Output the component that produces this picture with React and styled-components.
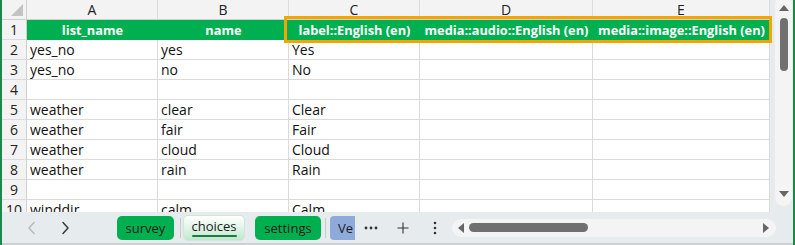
import React from "react";
import styled, { createGlobalStyle } from "styled-components";

const Global = createGlobalStyle`
  html, body { margin: 0; padding: 0; background: #fff; }
  body { font-family: "Open Sans", "Noto Sans", sans-serif; }
  * { box-sizing: border-box; }
`;

const GREEN = "#00b050";
const GRID = "#dadada";

const Window = styled.div`
  position: relative;
  width: 795px;
  height: 245px;
  border-left: 2px solid #1a8a4a;
  border-right: 2px solid #1a8a4a;
  background: #e6ebee;
  display: flex;
  flex-direction: column;
  overflow: hidden;
`;

const TopArea = styled.div`
  display: flex;
  height: 212px;
  overflow: hidden;
`;

const Sheet = styled.div`
  display: grid;
  grid-template-columns: 25px 131px 131px 131px 173px 177px;
  grid-auto-rows: 20px;
  width: 768px;
  background: #fff;
  align-content: start;
`;

const Cell = styled.div`
  border-right: 1px solid ${GRID};
  border-bottom: 1px solid ${GRID};
  font-size: 14px;
  color: #111;
  line-height: 20px;
  padding-left: 3px;
  white-space: nowrap;
  overflow: hidden;
`;

const HeadCell = styled.div`
  background: ${GREEN};
  color: #fff;
  font-weight: 700;
  font-size: 12.8px;
  line-height: 20px;
  text-align: center;
  white-space: nowrap;
  overflow: hidden;
`;

const ColLetter = styled.div`
  background: #f3f3f3;
  border-right: 1px solid #dcdcdc;
  border-bottom: 1px solid #cfcfcf;
  text-align: center;
  font-size: 14px;
  line-height: 19px;
  color: #222;
`;

const RowNum = styled.div`
  background: #f3f3f3;
  border-right: 1px solid #cfcfcf;
  border-bottom: 1px solid #dcdcdc;
  text-align: center;
  font-size: 14px;
  line-height: 20px;
  color: #222;
`;

const Corner = styled.div`
  position: relative;
  background: #f3f3f3;
  border-right: 1px solid #cfcfcf;
  border-bottom: 1px solid #cfcfcf;
  &::after {
    content: "";
    position: absolute;
    right: 3px;
    bottom: 3px;
    width: 0;
    height: 0;
    border-left: 12px solid transparent;
    border-bottom: 12px solid #c3c3c3;
  }
`;

const Highlight = styled.div`
  position: absolute;
  left: 282px;
  top: 16px;
  width: 488px;
  height: 27px;
  border: 3px solid #f5a500;
  pointer-events: none;
`;

const VScrollCol = styled.div`
  width: 23px;
  padding: 0 1px 0 5px;
  background: #e6ebee;
`;

const VTrack = styled.div`
  position: relative;
  height: 210px;
  margin-top: -4px;
  background: #f4f4f4;
  border-radius: 9px;
  display: flex;
  flex-direction: column;
  align-items: center;
`;

const TriUp = styled.div`
  margin-top: 9px;
  width: 0;
  height: 0;
  border-left: 5px solid transparent;
  border-right: 5px solid transparent;
  border-bottom: 6px solid #666;
`;

const VThumb = styled.div`
  margin-top: 7px;
  width: 8px;
  height: 53px;
  border-radius: 4px;
  background: #707070;
`;

const TriDown = styled.div`
  margin-top: auto;
  margin-bottom: 9px;
  width: 0;
  height: 0;
  border-left: 5px solid transparent;
  border-right: 5px solid transparent;
  border-top: 6px solid #666;
`;

const TabBar = styled.div`
  height: 33px;
  border-bottom: 2px solid #cdd0d2;
  display: flex;
  align-items: center;
  padding-left: 14px;
`;

const Nav = styled.div`
  width: 32px;
  height: 24px;
  display: flex;
  align-items: center;
  justify-content: center;
  margin-right: ${(p) => p.$mr || 0}px;
`;

const Tab = styled.div`
  height: 24px;
  width: ${(p) => p.$w}px;
  margin-left: ${(p) => p.$ml || 0}px;
  border-radius: 5px;
  background: ${GREEN};
  color: #1b1b1b;
  font-size: 13px;
  line-height: 24px;
  text-align: center;
  white-space: nowrap;
  overflow: hidden;
`;

const ActiveTab = styled.div`
  position: relative;
  height: 26px;
  width: ${(p) => p.$w}px;
  margin-left: ${(p) => p.$ml || 0}px;
  border-radius: 5px;
  border: 1px solid #cfe5d6;
  background: linear-gradient(180deg, #ffffff 0%, #e6f6eb 40%, #bfe8cd 100%);
  color: #1b1b1b;
  font-size: 13px;
  font-weight: 500;
  line-height: 20px;
  text-align: center;
  &::after {
    content: "";
    position: absolute;
    left: 8px;
    right: 7px;
    bottom: 3px;
    height: 2px;
    background: #1d7a45;
    border-radius: 1px;
  }
`;

const PeekTab = styled.div`
  height: 24px;
  width: 25px;
  margin-left: ${(p) => p.$ml || 0}px;
  border-radius: 4px 0 0 4px;
  background: #8eaadb;
  color: #1b1b1b;
  font-size: 13px;
  line-height: 24px;
  padding-left: 8px;
  white-space: nowrap;
  overflow: hidden;
`;

const Sep = styled.div`
  width: 1px;
  height: 20px;
  background: #c8cbce;
  margin-left: ${(p) => p.$ml || 0}px;
`;

const IconBtn = styled.div`
  width: 32px;
  height: 24px;
  display: flex;
  align-items: center;
  justify-content: center;
  color: #333;
`;

const HTrack = styled.div`
  margin-left: 1px;
  width: 324px;
  height: 18px;
  border-radius: 9px;
  background: #f4f4f4;
  display: flex;
  align-items: center;
  padding: 0 7px 0 6px;
`;

const TriLeft = styled.div`
  width: 0;
  height: 0;
  border-top: 5px solid transparent;
  border-bottom: 5px solid transparent;
  border-right: 6px solid #666;
`;

const TriRight = styled.div`
  margin-left: auto;
  width: 0;
  height: 0;
  border-top: 5px solid transparent;
  border-bottom: 5px solid transparent;
  border-left: 6px solid #666;
`;

const HThumb = styled.div`
  margin-left: 5px;
  width: 119px;
  height: 9px;
  border-radius: 4.5px;
  background: #707070;
`;

const letters = ["A", "B", "C", "D", "E"];
const headers = [
  "list_name",
  "name",
  "label::English (en)",
  "media::audio::English (en)",
  "media::image::English (en)",
];
const rows = [
  ["yes_no", "yes", "Yes"],
  ["yes_no", "no", "No"],
  ["", "", ""],
  ["weather", "clear", "Clear"],
  ["weather", "fair", "Fair"],
  ["weather", "cloud", "Cloud"],
  ["weather", "rain", "Rain"],
  ["", "", ""],
  ["winddir", "calm", "Calm"],
];

const Chevron = ({ dir, color }) => (
  <svg width="10" height="14" viewBox="0 0 10 14" fill="none">
    <path
      d={dir === "left" ? "M7 1.5 L2 7 L7 12.5" : "M3 1.5 L8 7 L3 12.5"}
      stroke={color}
      strokeWidth="1.4"
      strokeLinecap="round"
      strokeLinejoin="round"
    />
  </svg>
);

export default function App() {
  return (
    <>
      <Global />
      <Window>
        <TopArea>
          <Sheet>
            <Corner />
            {letters.map((l) => (
              <ColLetter key={l}>{l}</ColLetter>
            ))}
            <RowNum>1</RowNum>
            {headers.map((h) => (
              <HeadCell key={h}>{h}</HeadCell>
            ))}
            {rows.map((r, i) => (
              <React.Fragment key={i}>
                <RowNum>{i + 2}</RowNum>
                <Cell>{r[0]}</Cell>
                <Cell>{r[1]}</Cell>
                <Cell>{r[2]}</Cell>
                <Cell />
                <Cell />
              </React.Fragment>
            ))}
          </Sheet>
          <VScrollCol>
            <VTrack>
              <TriUp />
              <VThumb />
              <TriDown />
            </VTrack>
          </VScrollCol>
        </TopArea>
        <TabBar>
          <Nav $mr={1}>
            <Chevron dir="left" color="#b5b8bb" />
          </Nav>
          <Nav>
            <Chevron dir="right" color="#333" />
          </Nav>
          <Tab $w={57} $ml={36}>survey</Tab>
          <Sep $ml={6} />
          <ActiveTab $w={62} $ml={2}>choices</ActiveTab>
          <Tab $w={66} $ml={10}>settings</Tab>
          <Sep $ml={4} />
          <PeekTab $ml={4}>Ve</PeekTab>
          <IconBtn>
            <svg width="14" height="4" viewBox="0 0 14 4">
              <circle cx="2" cy="2" r="1.4" fill="#333" />
              <circle cx="7" cy="2" r="1.4" fill="#333" />
              <circle cx="12" cy="2" r="1.4" fill="#333" />
            </svg>
          </IconBtn>
          <IconBtn>
            <svg width="12" height="12" viewBox="0 0 12 12">
              <path d="M6 0.5 V11.5 M0.5 6 H11.5" stroke="#333" strokeWidth="1.1" />
            </svg>
          </IconBtn>
          <IconBtn>
            <svg width="4" height="14" viewBox="0 0 4 14">
              <circle cx="2" cy="2" r="1.3" fill="#333" />
              <circle cx="2" cy="7" r="1.3" fill="#333" />
              <circle cx="2" cy="12" r="1.3" fill="#333" />
            </svg>
          </IconBtn>
          <HTrack>
            <TriLeft />
            <HThumb />
            <TriRight />
          </HTrack>
        </TabBar>
        <Highlight />
      </Window>
    </>
  );
}
